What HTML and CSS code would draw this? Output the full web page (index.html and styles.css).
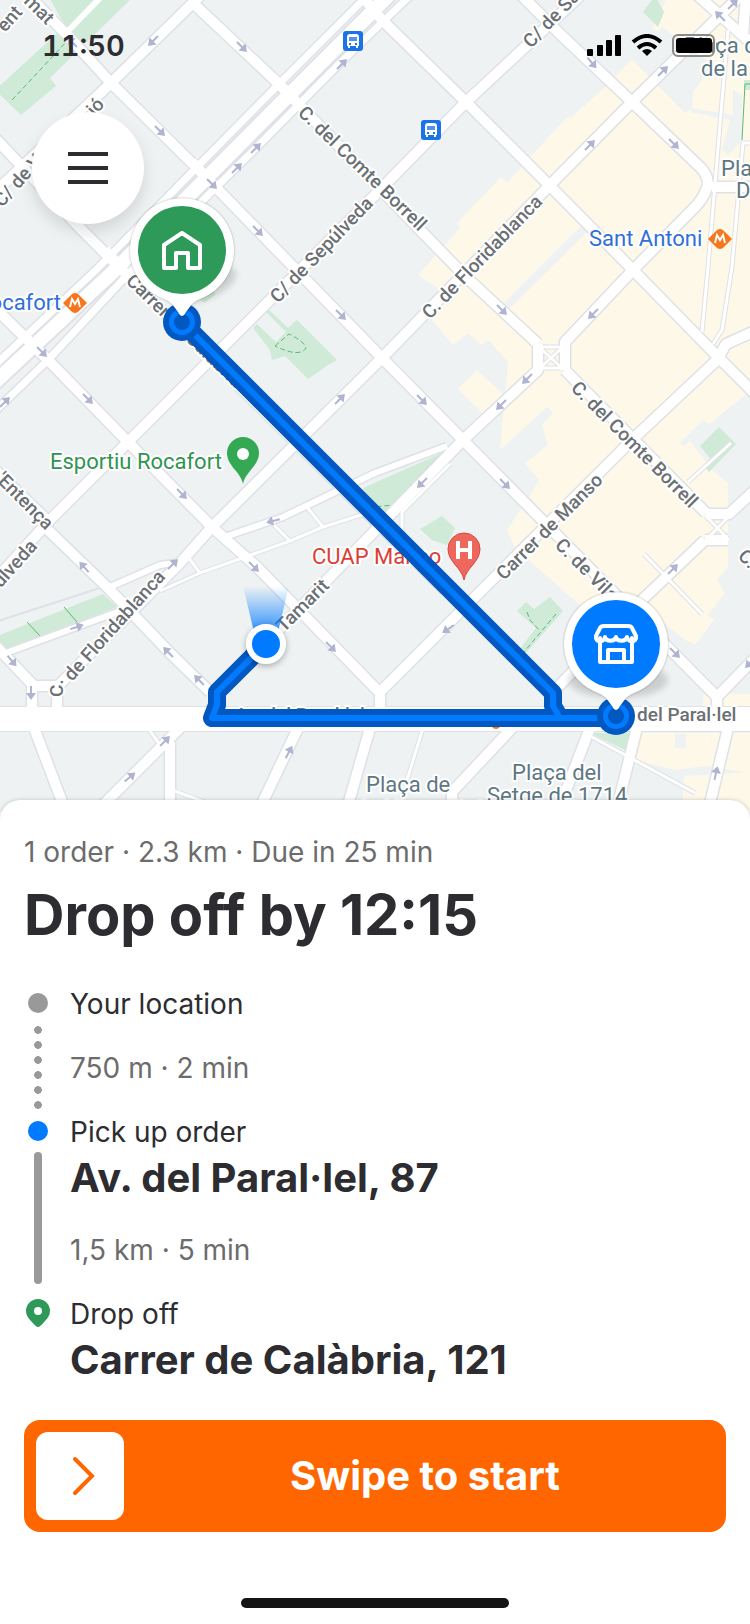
FILE: index.html
```html
<!DOCTYPE html>
<html lang="en">
<head>
<meta charset="utf-8">
<meta name="viewport" content="width=device-width, initial-scale=1">
<title>Drop off by 12:15</title>
<link rel="stylesheet" href="styles.css">
</head>
<body>
<div class="screen">

<!-- Map starts here -->
<div class="map">
<svg class="map_canvas" viewBox="0 0 750 812" role="img" aria-label="Route map">
<defs>
<g id="streets">
<!-- north west to south east -->
<path d="M28 -5 L70 38 L111 83 L197 168 L382 358 L463 440 L717 697 V712"/>
<path d="M193 3 L280 85 L422 232 L466 277 L538 344"/>
<path d="M565 370 L706 513"/>
<path d="M362 -4 L382 20 L466 102 L549 185 L633 270 L718 357 L755 394"/>
<path d="M520 -6 L560 34 L632 102 L701 168 Q710 178 707 188 Q703 199 695 207 L633 270"/>
<path d="M-5 138 L80 228 L182 330 L445 590"/>
<path d="M-5 308 L48 360 L128 442 L212 527 L257 567 L380 693 V712"/>
<path d="M-5 470 L50 523"/>
<path d="M48 530 L110 590 L170 653 L210 692"/>
<path d="M-5 645 L32 684 V710"/>
<path d="M32 686 H57 V710"/>
<!-- south west to north east -->
<path d="M200 -4 L111 83 L-5 192"/>
<path d="M582 -6 L466 102 L375 195 L128 442 L50 520 L-5 580"/>
<path d="M758 -22 L632 102 L550 185 L382 358 L212 527 L180 563 L57 687"/>
<path d="M633 270 L565 342 V370"/>
<path d="M538 344 V370 L463 440 L395 510 L266 643 L215 692"/>
<path d="M755 331 L726 344 L717 360 L635 437 L382 690"/>
<path d="M755 490 L729 514 H706"/>
<path d="M705 540 L642 600 L555 690"/>
<path d="M728 540 H705"/>
<path d="M755 658 L717 697"/>
<path d="M712 187 H755"/>
<path d="M696 -6 L750 42"/>
<path d="M746 -5 L743 36"/>
<!-- south of the avenue -->
<path d="M34 728 L66 812"/>
<path d="M180 728 L100 808"/>
<path d="M170 742 V812"/>
<path d="M298 728 L258 812"/>
<path d="M370 728 L346 812"/>
<path d="M512 728 L452 792 V812"/>
<path d="M590 728 L560 806"/>
<path d="M637 728 L616 812"/>
<path d="M728 728 L708 812"/>
</g>
<g id="lanes">
<path d="M447 446 L375 473 L283 517 L222 538"/>
<path d="M175 563 L160 565 L110 587"/>
<path d="M-5 657 L123 610"/>
</g>
<g id="alleys">
<path d="M377 510 L323 527 L290 541 L200 573 L160 591"/>
<path d="M307 507 L323 527"/>
<path d="M272 523 L290 541"/>
<path d="M188 557 L200 573"/>
<path d="M450 464 L402 512 V545"/>
<path d="M540 347 H562 M540 368 H562 M540 348 L562 368 M562 348 L540 368"/>
<path d="M706 516 L729 540 M729 516 L706 540"/>
<path d="M728 30 L708 267 L702 332"/>
<path d="M755 143 H743 L732 267 L722 330 L713 344"/>
<path d="M731 443 L688 482"/>
<path d="M644 554 L702 614"/>
<path d="M148 728 L160 745"/>
<path d="M172 790 L210 804"/>
<path d="M423 728 L407 780"/>
<path d="M592 737 L695 793"/>
</g>
<g id="arrow">
<path d="M-7 -1 H0 V-5 L7 0 L0 5 V1 H-7 Z"/>
</g>
<g id="metro">
<path d="M-12 0 L-4 -8 Q0 -12 4 -8 L12 0 L4 8 Q0 12 -4 8 Z"/>
</g>
<g id="bus">
<rect class="bus_box" x="-10" y="-10" width="20" height="20" rx="3"/>
<path class="bus_body" d="M-6 -4 Q-6 -7 -3 -7 H3 Q6 -7 6 -4 V5 H5 V7 H3 V5 H-3 V7 H-5 V5 H-6 Z"/>
<path class="bus_window" d="M-4 -4 H4 V0 H-4 Z"/>
<path class="bus_lamp" d="M-4 3 H-2 M2 3 H4"/>
</g>
<linearGradient id="beam" x1="0" y1="0" x2="0" y2="1">
<stop offset="0" stop-color="#007aff" stop-opacity="0"/>
<stop offset="1" stop-color="#007aff" stop-opacity="0.8"/>
</linearGradient>
</defs>

<rect class="land" width="750" height="812"/>

<!-- commercial areas -->
<g class="shops">
<path d="M632 59 L605 87 L572 117 L566 118 L532 155 L508 182 L500 178 L457 223 L460 228 L418 275 L438 288 L432 320 L453 345 L468 333 L481 345 L488 340 L508 362 L500 450 L547 407 L553 413 L542 425 L548 445 L525 463 L539 480 L527 500 L507 530 L515 548 L582 607 L638 603 L685 640 L695 645 L714 620 L708 615 L725 593 L717 580 L728 567 V483 L712 470 L690 440 L745 395 L755 388 V-5 H668 L652 28 L715 65 L690 80 L685 112 Z"/>
<path d="M477 370 L502 393 L498 412 L482 413 L458 389 Z"/>
<path d="M640 733 H755 V774 L705 766 L675 770 L627 758 Z"/>
<path d="M684 776 L755 772 V812 H682 Z"/>
<path d="M703 694 H755 V706 H703 Z"/>
</g>
<g class="land">
<path d="M632 59 L662 27 L712 65 L693 92 L692 108 L685 113 Z"/>
<path d="M692 108 L733 115 V90 L742 95 V140 L728 155 L722 150 L730 120 L690 112 Z"/>
<path d="M675 734 H686 V748 H675 Z"/>
<path d="M680 443 L703 420 L711 425 L684 446 Z"/>
<path d="M583 224 L589 230 L508 310 L502 305 Z"/>
</g>

<!-- parks -->
<g class="parks">
<path d="M48 -5 H135 L50 78 L56 86 L21 115 L-5 90 L65 26 Z"/>
<path d="M643 12 L655 -4 L664 12 L658 27 Z"/>
<path d="M297 320 L337 360 L328 365 L308 379 L285 356 L272 360 L270 350 L253 328 L257 324 L276 342 L286 332 L265 311 L268 309 L288 328 Z"/>
<path d="M-5 637 L103 594 L117 607 L7 649 Z"/>
<path d="M363 488 L442 453 L390 512 L372 512 Z"/>
<path d="M420 529 L442 516 L455 528 L447 545 L432 540 Z"/>
<path d="M700 446 L719 427 L736 444 L709 472 L704 466 L710 458 Z"/>
<path d="M517 611 L526 602 L534 609 L550 597 L563 611 L524 655 L519 650 L536 628 Z"/>
<path d="M590 733 H633 L627 751 Z"/>
<path d="M200 300 L212 290 L216 294 L205 303 Z"/>
<path d="M744 80 H755 V90 H744 Z"/>
</g>
<path class="path_dash" d="M12 100 L68 40 M275 346 L289 334 Q305 342 306 348 Q300 358 275 346 M440 455 L392 505 L375 507 M527 612 L530 620 L540 631 M556 614 L524 652"/>
<path class="path_line" d="M27 622 L40 636 M64 607 L77 622 M755 84 H745 L742 140"/>

<!-- roads: outlines first, then the white fill -->
<g class="street_edge">
<use href="#streets"/>
</g>
<use href="#lanes" class="lane_edge"/>
<use href="#alleys" class="alley_edge"/>
<path class="avenue_edge" d="M390 -6 L267 117 L115 270 L-8 385"/>
<path class="side_edge" d="M368 -5 L280 83 L200 164 L97 269 L-6 366"/>
<path class="side_edge" d="M418 -12 L340 63 L257 147 L130 272 L48 360 L-8 414"/>
<path class="paralel_edge" d="M-5 719 H755"/>
<path class="alley_line" d="M-5 622 L103 587"/>
<use href="#alleys" class="alley"/>
<use href="#lanes" class="lane"/>
<g class="street">
<use href="#streets"/>
</g>
<path class="lane" d="M66 33 L102 -4"/>
<path class="avenue" d="M390 -6 L267 117 L115 270 L-8 385"/>
<path class="side" d="M368 -5 L280 83 L200 164 L97 269 L-6 366"/>
<path class="side" d="M418 -12 L340 63 L257 147 L130 272 L48 360 L-8 414"/>
<path class="street" d="M275 80 L295 100 M192 162 L216 188 M22 334 L48 360 M105 250 L116 262"/>
<path class="paralel" d="M-5 719 H755"/>

<!-- one way arrows -->
<g class="arrows">
<use href="#arrow" transform="translate(153 41) rotate(135)"/>
<use href="#arrow" transform="translate(242 47) rotate(45)"/>
<use href="#arrow" transform="translate(72 42) rotate(225)"/>
<use href="#arrow" transform="translate(160 131) rotate(45)"/>
<use href="#arrow" transform="translate(342 64) rotate(-45)"/>
<use href="#arrow" transform="translate(256 148) rotate(-45)"/>
<use href="#arrow" transform="translate(237 168) rotate(-45)"/>
<use href="#arrow" transform="translate(212 184) rotate(45)"/>
<use href="#arrow" transform="translate(258 231) rotate(45)"/>
<use href="#arrow" transform="translate(592 63) rotate(50)"/>
<use href="#arrow" transform="translate(663 71) rotate(-45)"/>
<use href="#arrow" transform="translate(590 145) rotate(-45)"/>
<use href="#arrow" transform="translate(674 144) rotate(45)"/>
<use href="#arrow" transform="translate(720 16) rotate(225)"/>
<use href="#arrow" transform="translate(733 4) rotate(-45)"/>
<use href="#arrow" transform="translate(341 315) rotate(45)"/>
<use href="#arrow" transform="translate(42 352) rotate(45)"/>
<use href="#arrow" transform="translate(88 399) rotate(45)"/>
<use href="#arrow" transform="translate(5 402) rotate(-45)"/>
<use href="#arrow" transform="translate(340 399) rotate(-45)"/>
<use href="#arrow" transform="translate(182 494) rotate(45)"/>
<use href="#arrow" transform="translate(273 521) rotate(165)"/>
<use href="#arrow" transform="translate(502 310) rotate(45)"/>
<use href="#arrow" transform="translate(593 314) rotate(135)"/>
<use href="#arrow" transform="translate(527 379) rotate(135)"/>
<use href="#arrow" transform="translate(501 405) rotate(135)"/>
<use href="#arrow" transform="translate(422 400) rotate(45)"/>
<use href="#arrow" transform="translate(422 483) rotate(135)"/>
<use href="#arrow" transform="translate(505 484) rotate(45)"/>
<use href="#arrow" transform="translate(84 567) rotate(228)"/>
<use href="#arrow" transform="translate(173 564) rotate(-45)"/>
<use href="#arrow" transform="translate(254 567) rotate(45)"/>
<use href="#arrow" transform="translate(77 627) rotate(-18)"/>
<use href="#arrow" transform="translate(12 661) rotate(50)"/>
<use href="#arrow" transform="translate(31 693) rotate(90)"/>
<use href="#arrow" transform="translate(168 652) rotate(225)"/>
<use href="#arrow" transform="translate(199 680) rotate(225)"/>
<use href="#arrow" transform="translate(331 647) rotate(45)"/>
<use href="#arrow" transform="translate(448 629) rotate(145)"/>
<use href="#arrow" transform="translate(673 569) rotate(-45)"/>
<use href="#arrow" transform="translate(675 653) rotate(45)"/>
<use href="#arrow" transform="translate(750 663) rotate(135)"/>
<use href="#arrow" transform="translate(165 741) rotate(-45)"/>
<use href="#arrow" transform="translate(130 777) rotate(-40)"/>
<use href="#arrow" transform="translate(289 752) rotate(-62)"/>
<use href="#arrow" transform="translate(716 773) rotate(-78)"/>
</g>

<!-- street names -->
<g class="street_name">
<text transform="translate(23 2) rotate(45)">mat</text>
<text transform="translate(5 33) rotate(-48)">ent</text>
<text transform="translate(88 124) rotate(-48)">ció</text>
<text transform="translate(2 208) rotate(-48)">C/ de V</text>
<text transform="translate(297 114) rotate(44)">C. del Comte Borrell</text>
<text transform="translate(278 304) rotate(-46)">C/ de Sepúlveda</text>
<text transform="translate(531 49) rotate(-46)">C/ de Sa</text>
<text transform="translate(430 320) rotate(-46)">C. de Floridablanca</text>
<text transform="translate(125 282) rotate(44)">Carrer de Calàbria</text>
<text transform="translate(-5 480) rotate(45)">'Entença</text>
<text transform="translate(38 547) rotate(-48)" text-anchor="end">úlveda</text>
<text transform="translate(570 389) rotate(45)">C. del Comte Borrell</text>
<text transform="translate(504 581) rotate(-45)">Carrer de Manso</text>
<text transform="translate(554 546) rotate(45)">C. de Vila</text>
<text transform="translate(63 697) rotate(-90)">C.</text>
<text transform="translate(72 682) rotate(-48)">de Floridablanca</text>
<text transform="translate(284 633) rotate(-45)">Tamarit</text>
<text transform="translate(737 557) rotate(45)">C.</text>
<text x="235" y="721">Av. del Paral·lel</text>
<text x="637" y="721">del Paral·lel</text>
</g>

<!-- places -->
<g class="place_name">
<text x="684" y="53">Plaça d</text>
<text x="701" y="76">de la</text>
<text x="721" y="176">Pla</text>
<text x="736" y="198">D</text>
<text x="366" y="792">Plaça de</text>
<text x="361" y="816">la Hispanitat</text>
<text x="512" y="780">Plaça del</text>
<text x="487" y="803">Setge de 1714</text>
</g>
<g class="transit_name">
<text x="589" y="246">Sant Antoni</text>
<text x="61" y="310" text-anchor="end">ocafort</text>
<text x="383" y="727">Poble Sec</text>
</g>
<text class="sport_name" x="50" y="469">Esportiu Rocafort</text>
<text class="health_name" x="312" y="564">CUAP Manso</text>
<g class="metro">
<use href="#metro" x="720" y="239"/>
<use href="#metro" x="75" y="303"/>
<use href="#metro" x="496" y="719"/>
<path class="metro_mark" d="M715 243 L717 235 L720 240 L723 235 L725 243 M70 307 L72 299 L75 304 L78 299 L80 307"/>
</g>
<use href="#bus" x="353" y="41"/>
<use href="#bus" x="431" y="130"/>
<path class="sport_pin" d="M243 484 C241 472 227 466 227 453 A16 16 0 0 1 259 453 C259 466 245 472 243 484 Z"/>
<circle class="pin_hole" cx="243" cy="454" r="6"/>
<path class="health_pin" d="M464 580 C462 568 448 562 448 549 A16 16 0 0 1 480 549 C480 562 466 568 464 580 Z"/>
<path class="health_mark" d="M458 541 V559 M470 541 V559 M458 550 H470"/>

<!-- route -->
<g class="route_edge">
<path d="M182 322 L553 693 V706 L560 718"/>
<path d="M266 643 L217 692 V705 L212 718 H616"/>
</g>
<g class="route">
<path d="M182 322 L553 693 V706 L560 718"/>
<path d="M266 643 L217 692 V705 L212 718 H616"/>
</g>
<g class="node">
<circle class="node_dark" cx="182" cy="322" r="19"/>
<circle class="node_light" cx="182" cy="322" r="13"/>
<circle class="node_dark" cx="182" cy="322" r="8"/>
<circle class="node_dark" cx="616" cy="716" r="19"/>
<circle class="node_light" cx="616" cy="716" r="13"/>
<circle class="node_dark" cx="616" cy="716" r="8"/>
</g>

<!-- courier position -->
<path class="beam" d="M243 586 H289 L278 632 H254 Z"/>
<circle class="courier" cx="266" cy="644" r="17"/>

<!-- drop off pin -->
<ellipse class="pin_shade" cx="202" cy="284" rx="36" ry="16" transform="rotate(-20 202 284)"/>
<path class="pin" d="M182 316 Q180 316 178 312 L172 304 Q169 301 164 299 A52 52 0 1 1 200 299 Q195 301 192 304 L186 312 Q184 316 182 316 Z"/>
<circle class="pin_green" cx="182" cy="250" r="44"/>
<path class="pin_icon" d="M164 245 L182 233 L200 245 V268 H188 V253 H176 V268 H164 Z"/>

<!-- pick up pin -->
<ellipse class="pin_shade" cx="618" cy="680" rx="50" ry="18"/>
<path class="pin" d="M616 710 Q614 710 612 706 L606 698 Q603 695 598 693 A52 52 0 1 1 634 693 Q629 695 626 698 L620 706 Q618 710 616 710 Z"/>
<circle class="pin_blue" cx="616" cy="644" r="44"/>
<path class="pin_icon" d="M600 638 V662 H632 V638 M608 662 V650 H624 V662 M604 626 H628 Q631 626 632 628 L636 636 C637 643 628 643 627 637 C626 642 617 642 616 637 C615 642 606 642 605 637 C604 643 595 643 596 636 L600 628 Q601 626 604 626 Z"/>
</svg>

<div class="status_bar">
<time class="clock">11:50</time>
<svg class="status_icons" viewBox="0 0 132 24" width="132" height="24" aria-hidden="true">
<rect x="0" y="15" width="6" height="7" rx="1"/>
<rect x="10" y="11" width="6" height="11" rx="1"/>
<rect x="19" y="6" width="6" height="16" rx="1"/>
<rect x="28" y="1" width="6" height="21" rx="1"/>
<path class="wifi" d="M46 8 Q60 -4 74 8 M51 14 Q60 6 69 14"/>
<path d="M55 17 Q60 13 65 17 L60 22 Z"/>
<rect class="battery" x="86" y="1" width="41" height="21" rx="5"/>
<rect x="89" y="4" width="36" height="15" rx="3"/>
<path class="battery_tip" d="M129 8 Q132 11 129 15 Z"/>
</svg>
</div>
<button type="button" class="menu_button" aria-label="Menu">
<svg viewBox="0 0 40 32" width="40" height="32" aria-hidden="true">
<path d="M0 2 H40 M0 16 H40 M0 30 H40"/>
</svg>
</button>
</div>
<!-- Map ends here -->

<!-- Order sheet starts here -->
<div class="sheet">
<p class="summary">1 order · 2.3 km · Due in 25 min</p>
<h1 class="title">Drop off by 12:15</h1>
<ol class="stops">
<li class="stop">
<div class="rail">
<span class="marker"><span class="dot dot_gray"></span></span>
<span class="dotted"></span>
</div>
<div class="stop_text">
<p class="stop_label">Your location</p>
<p class="leg">750 m · 2 min</p>
</div>
</li>
<li class="stop">
<div class="rail">
<span class="marker"><span class="dot dot_blue"></span></span>
<span class="solid"></span>
</div>
<div class="stop_text">
<p class="stop_label">Pick up order</p>
<p class="address">Av. del Paral·lel, 87</p>
<p class="leg">1,5 km · 5 min</p>
</div>
</li>
<li class="stop">
<div class="rail">
<span class="marker">
<svg class="marker_pin" viewBox="0 0 24 28" width="24" height="28" aria-hidden="true">
<path d="M12 28 Q10 28 5 22 Q0 17 0 12 A12 12 0 0 1 24 12 Q24 17 19 22 Q14 28 12 28 Z"/>
<circle cx="12" cy="12" r="4"/>
</svg>
</span>
</div>
<div class="stop_text">
<p class="stop_label">Drop off</p>
<p class="address">Carrer de Calàbria, 121</p>
</div>
</li>
</ol>
<button type="button" class="swipe">
<span class="swipe_handle">
<svg viewBox="0 0 32 40" width="32" height="40" aria-hidden="true">
<path d="M11 3 L28 20 L11 37"/>
</svg>
</span>
<span class="swipe_label">Swipe to start</span>
</button>
<div class="home_bar"></div>
</div>
<!-- Order sheet ends here -->

</div>
</body>
</html>
```
FILE: styles.css
```css
* {
  box-sizing: border-box;
}

body {
  margin: 0;
  background: #fff;
  color: #2d2c31;
  font-family: Inter, "Liberation Sans", sans-serif;
}

p, h1, ol {
  margin: 0;
  padding: 0;
}

.screen {
  display: flex;
  flex-direction: column;
  min-height: 100vh;
}

/* map */
.map {
  position: relative;
  overflow: hidden;
}

.map_canvas {
  display: block;
  width: 100%;
  height: auto;
  fill: none;
}

.land { fill: #eef2f3; }
.shops { fill: #fef8e8; }
.parks { fill: #cfead6; }

.path_dash {
  stroke: #5bb974;
  stroke-width: 1;
  stroke-dasharray: 5 3;
}

.path_line {
  stroke: #5bb974;
  stroke-width: 1;
}

.street, .side, .avenue, .lane, .alley, .paralel {
  stroke: #fff;
  stroke-linejoin: round;
}

.street_edge, .side_edge, .avenue_edge, .lane_edge, .alley_edge, .paralel_edge {
  stroke: #dfe1e6;
  stroke-linejoin: round;
}

.street { stroke-width: 10; }
.street_edge { stroke-width: 13; }
.side { stroke-width: 7; }
.side_edge { stroke-width: 10; }
.avenue { stroke-width: 14; }
.avenue_edge { stroke-width: 18; }
.lane { stroke-width: 6; }
.lane_edge { stroke-width: 9; }
.alley { stroke-width: 3; }
.alley_edge { stroke-width: 5; }
.paralel { stroke-width: 24; }
.paralel_edge { stroke-width: 26; }

.alley_line {
  stroke: #dfe1e6;
  stroke-width: 2;
}

.arrows { fill: #b0b4d0; }

.street_name, .place_name, .transit_name, .sport_name, .health_name {
  font-family: Roboto, "Liberation Sans", sans-serif;
  stroke: #fff;
  stroke-width: 4;
  stroke-linejoin: round;
  paint-order: stroke;
}

.street_name {
  font-size: 19px;
  font-weight: 500;
  fill: #6b7075;
}

.place_name {
  font-size: 22px;
  fill: #5d7884;
}

.transit_name {
  font-size: 22px;
  fill: #2f6fdb;
}

.sport_name {
  font-size: 22px;
  fill: #2f9450;
}

.health_name {
  font-size: 22px;
  fill: #dc3e35;
}

.metro { fill: #f9751b; }

.metro_mark {
  fill: none;
  stroke: #fff;
  stroke-width: 2;
}

.bus_box { fill: #1a73e8; }
.bus_body { fill: #fff; }
.bus_window { fill: #4f93ee; }

.bus_lamp {
  stroke: #1a73e8;
  stroke-width: 2;
}

.sport_pin { fill: #34a853; }
.pin_hole { fill: #fff; }

.health_pin {
  fill: #ee675c;
  stroke: #d9483d;
}

.health_mark {
  stroke: #fff;
  stroke-width: 4;
}

.route_edge {
  stroke: #0058c0;
  stroke-width: 18;
  stroke-linejoin: round;
}

.route {
  stroke: #007aff;
  stroke-width: 6;
  stroke-linejoin: round;
}

.node_dark { fill: #0058c0; }
.node_light { fill: #007aff; }
.beam { fill: url(#beam); }

.courier {
  fill: #007aff;
  stroke: #fff;
  stroke-width: 6;
  filter: drop-shadow(0 2px 3px rgba(0, 0, 0, 0.3));
}

.pin {
  fill: #fff;
  filter: drop-shadow(0 0 1px rgba(0, 0, 0, 0.3));
}

.pin_shade {
  fill: #000;
  opacity: 0.14;
  filter: blur(3px);
}

.pin_green { fill: #2d9a5a; }
.pin_blue { fill: #007aff; }

.pin_icon {
  stroke: #fff;
  stroke-width: 4;
  stroke-linejoin: round;
  stroke-linecap: round;
}

.status_bar {
  position: absolute;
  top: 0;
  left: 0;
  right: 0;
  display: flex;
  align-items: center;
  justify-content: space-between;
  padding: 28px 31px 0 42px;
}

.clock {
  font-size: 29px;
  line-height: 36px;
  font-weight: 600;
  font-variant-numeric: tabular-nums;
}

.wifi {
  fill: none;
  stroke: #000;
  stroke-width: 4;
}

.battery {
  fill: none;
  stroke: #8c8a86;
  stroke-width: 2;
}

.battery_tip { fill: #8c8a86; }

.menu_button {
  position: absolute;
  top: 112px;
  left: 32px;
  display: flex;
  align-items: center;
  justify-content: center;
  width: 112px;
  height: 112px;
  padding: 0;
  border: 0;
  border-radius: 50%;
  background: #fff;
  box-shadow: 0 8px 16px rgba(0, 0, 0, 0.12);
}

.menu_button path {
  stroke: #2d2c31;
  stroke-width: 4;
}

/* order sheet */
.sheet {
  position: relative;
  flex: 1;
  display: flex;
  flex-direction: column;
  margin-top: -12px;
  padding: 32px 24px 16px;
  border-radius: 20px 20px 0 0;
  background: #fff;
  box-shadow: 0 0 4px rgba(0, 0, 0, 0.2);
}

.summary {
  font-size: 28px;
  line-height: 40px;
  color: #6c6c6c;
}

.title {
  margin: 8px 0 34px;
  font-size: 56px;
  line-height: 70px;
  font-weight: 700;
}

.stops {
  list-style: none;
}

.stop {
  display: grid;
  grid-template-columns: 28px 1fr;
  column-gap: 18px;
}

.rail {
  display: flex;
  flex-direction: column;
  align-items: center;
}

.marker {
  display: flex;
  align-items: center;
  height: 38px;
}

.dot {
  width: 20px;
  height: 20px;
  border-radius: 50%;
}

.dot_gray { background: #999; }
.dot_blue { background: #007aff; }
.marker_pin path { fill: #2d9a5a; }
.marker_pin circle { fill: #fff; }

.dotted {
  flex: 1;
  width: 8px;
  margin: 4px 0 0;
  background: radial-gradient(circle 4px at 4px 4px, #999 90%, transparent) 0 0 / 8px 15px;
}

.solid {
  flex: 1;
  width: 8px;
  margin: 2px 0 10px;
  border-radius: 4px;
  background: #999;
}

.stop_label {
  font-size: 28px;
  line-height: 40px;
}

.address {
  font-size: 40px;
  line-height: 52px;
  font-weight: 700;
}

.leg {
  margin: 24px 0;
  font-size: 28px;
  line-height: 40px;
  color: #6c6c6c;
}

.address + .leg {
  margin-top: 26px;
}

.swipe {
  display: flex;
  align-items: center;
  margin-top: 34px;
  padding: 12px 0 12px 12px;
  border: 0;
  border-radius: 16px;
  background: #ff6600;
  color: #fff;
  font-family: inherit;
}

.swipe_handle {
  display: flex;
  align-items: center;
  justify-content: center;
  width: 88px;
  height: 88px;
  border-radius: 12px;
  background: #fff;
}

.swipe_handle path {
  fill: none;
  stroke: #ff6600;
  stroke-width: 4;
  stroke-linecap: round;
}

.swipe_label {
  flex: 1;
  font-size: 40px;
  line-height: 52px;
  font-weight: 700;
  text-align: center;
}

.home_bar {
  width: 268px;
  height: 10px;
  margin: auto auto 0;
  border-radius: 5px;
  background: #141414;
}
```
